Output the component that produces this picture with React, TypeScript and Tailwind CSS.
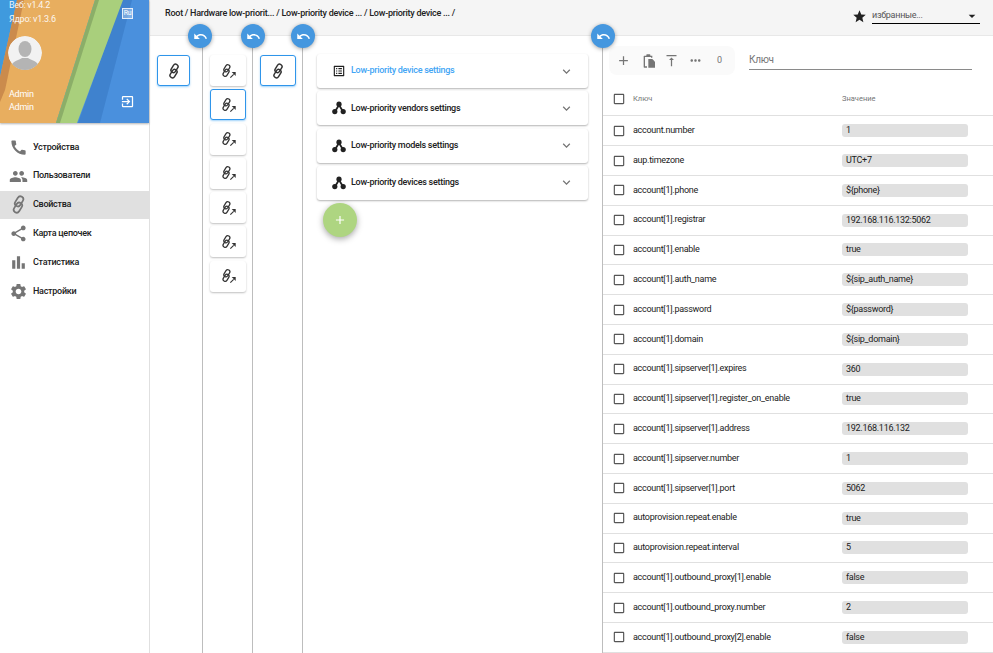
import { MdCall, MdPeople, MdShare, MdBarChart, MdSettings, MdStar, MdAdd, MdUndo, MdExpandMore, MdExitToApp, MdCheckBoxOutlineBlank, MdMoreHoriz, MdVerticalAlignTop, MdListAlt, MdArrowDropDown } from "react-icons/md";

function Chain() {
  return (
    <g fill="none" stroke="currentColor" strokeWidth="2.2" transform="rotate(32 12 12)">
      <rect x="6.8" y="1.5" width="7.4" height="13.5" rx="3.7" />
      <rect x="9.8" y="9" width="7.4" height="13.5" rx="3.7" />
    </g>
  );
}

function LinkIcon({ size = 16, className = "" }: { size?: number; className?: string }) {
  return (
    <svg width={size} height={size} viewBox="0 0 24 24" className={className}>
      <Chain />
    </svg>
  );
}

function LinkArrowIcon() {
  return (
    <svg width={18} height={16} viewBox="0 0 27 24" className="text-[#333]">
      <g transform="translate(1 1) scale(0.85)">
        <Chain />
      </g>
      <path d="M17 22l5-5" fill="none" stroke="currentColor" strokeWidth="1.6" />
      <path d="M19 13.5h6v6z" fill="currentColor" />
    </svg>
  );
}

function HubIcon() {
  return (
    <svg width={14} height={14} viewBox="0 0 14 14" fill="#212121">
      <path d="M7 4L3 10.5M7 4l4 6.5" stroke="#212121" strokeWidth="1.8" />
      <circle cx="7" cy="3.2" r="2.6" />
      <circle cx="2.8" cy="10.6" r="2.6" />
      <circle cx="11.2" cy="10.6" r="2.6" />
    </svg>
  );
}

function PasteIcon() {
  return (
    <svg width={16} height={16} viewBox="0 0 24 24" fill="currentColor">
      <path d="M9 2h4a1 1 0 0 1 1 1v1h3v3h-2V6H6v14h3v2H5a1 1 0 0 1-1-1V5a1 1 0 0 1 1-1h3V3a1 1 0 0 1 1-1z" />
      <path d="M11 9h6l4 4v9H11z" />
    </svg>
  );
}

function Avatar() {
  return (
    <svg width="34" height="34" viewBox="0 0 34 34" className="rounded-full">
      <circle cx="17" cy="17" r="17" fill="#f2f2f2" />
      <ellipse cx="17" cy="13" rx="6.5" ry="8" fill="#b4b4b4" />
      <path d="M3 31c1-6 8-7 11-9h6c3 2 10 3 11 9a17 17 0 0 1-28 0z" fill="#b4b4b4" />
    </svg>
  );
}

function Banner() {
  return (
    <svg className="absolute inset-0" width="150" height="123" viewBox="0 0 150 123" preserveAspectRatio="none">
      <rect width="150" height="123" fill="#4a90dd" />
      <polygon points="78,123 122,0 132,0 100,123" fill="#3a7cc8" opacity="0.7" />
      <polygon points="0,0 17,0 0,77" fill="#3f9ade" />
      <polygon points="17,0 95,0 56,123 0,123 0,77" fill="#e8ae5f" />
      <polygon points="17,0 24,0 5,90 0,102 0,77" fill="#c17f45" opacity="0.75" />
      <polygon points="95,0 123,0 77,123 56,123" fill="#a9cf7c" />
      <polygon points="95,0 99,0 60,123 56,123" fill="#7f9f60" opacity="0.7" />
    </svg>
  );
}

const navItems = [
  { label: "Устройства", icon: <MdCall size={19} /> },
  { label: "Пользователи", icon: <MdPeople size={19} /> },
  { label: "Свойства", icon: <LinkIcon size={19} />, active: true },
  { label: "Карта цепочек", icon: <MdShare size={19} /> },
  { label: "Статистика", icon: <MdBarChart size={19} /> },
  { label: "Настройки", icon: <MdSettings size={19} /> },
];

const rows = [
  ["account.number", "1"],
  ["aup.timezone", "UTC+7"],
  ["account[1].phone", "${phone}"],
  ["account[1].registrar", "192.168.116.132:5062"],
  ["account[1].enable", "true"],
  ["account[1].auth_name", "${sip_auth_name}"],
  ["account[1].password", "${password}"],
  ["account[1].domain", "${sip_domain}"],
  ["account[1].sipserver[1].expires", "360"],
  ["account[1].sipserver[1].register_on_enable", "true"],
  ["account[1].sipserver[1].address", "192.168.116.132"],
  ["account[1].sipserver.number", "1"],
  ["account[1].sipserver[1].port", "5062"],
  ["autoprovision.repeat.enable", "true"],
  ["autoprovision.repeat.interval", "5"],
  ["account[1].outbound_proxy[1].enable", "false"],
  ["account[1].outbound_proxy.number", "2"],
  ["account[1].outbound_proxy[2].enable", "false"],
];

const sections = [
  { label: "Low-priority device settings", active: true },
  { label: "Low-priority vendors settings" },
  { label: "Low-priority models settings" },
  { label: "Low-priority devices settings" },
];

function BackButton({ className }: { className: string }) {
  return (
    <button className={`absolute -top-[12px] z-10 flex h-6 w-6 items-center justify-center rounded-full bg-[#4597df] text-white shadow-[0_1px_4px_rgba(0,0,0,0.35)] ${className}`}>
      <MdUndo size={15} />
    </button>
  );
}

function Tile({ selected, arrow }: { selected?: boolean; arrow?: boolean }) {
  return (
    <div
      className={`flex h-[31px] w-9 shrink-0 items-center justify-center rounded-[3px] bg-white ${
        selected ? "border border-[#2f95ea] shadow-[0_1px_2px_rgba(66,165,245,0.5)]" : "shadow-[0_1px_2px_rgba(0,0,0,0.25)]"
      }`}
    >
      {arrow ? <LinkArrowIcon /> : <LinkIcon size={16} className="text-[#333]" />}
    </div>
  );
}

export default function App() {
  return (
    <div className="flex h-[653px] w-[993px] overflow-hidden bg-white font-['Roboto',sans-serif] text-[9px] tracking-[-0.28px] text-[#212121]">
      {/* sidebar */}
      <aside className="h-full w-[150px] shrink-0 border-r border-[#e0e0e0]">
        <div className="relative h-[123px] overflow-hidden text-white shadow-[0_1px_2px_rgba(0,0,0,0.3)]">
          <Banner />
          <div className="relative flex h-full flex-col px-[9px]">
            <div className="mt-[-1px] leading-[13px] opacity-90">Веб: v1.4.2</div>
            <div className="mt-[1px] leading-[13px] opacity-90">Ядро: v1.3.6</div>
            <div className="-ml-[1px] mt-[10px] h-[34px] w-[34px]">
              <Avatar />
            </div>
            <div className="mt-[18px] leading-[13px]">Admin</div>
            <div className="mt-[0px] leading-[13px]">Admin</div>
          </div>
          <div className="absolute left-[122px] top-[8px] flex h-[11px] w-[11px] items-center justify-center border border-white/80 bg-white/30 text-[7px] leading-none">
            Ru
          </div>
          <MdExitToApp size={15} className="absolute left-[120px] top-[94px] text-white" />
        </div>
        <nav className="mt-[10px]">
          {navItems.map((item) => (
            <div
              key={item.label}
              className={`flex h-[28.8px] items-center font-medium ${item.active ? "bg-[#e0e0e0]" : ""}`}
            >
              <div className="flex w-[33px] shrink-0 justify-center pl-[4px] text-[#757575]">{item.icon}</div>
              <span>{item.label}</span>
            </div>
          ))}
        </nav>
      </aside>

      <div className="flex min-w-0 flex-1 flex-col">
        {/* header */}
        <header className="flex h-[36px] shrink-0 items-start justify-between border-b border-[#e8e8e8] bg-[#f5f5f5] pl-[15px] pr-[13px]">
          <div className="mt-[7px] font-medium leading-[13px] tracking-[-0.25px]">
            Root / Hardware low-priorit... / Low-priority device ... / Low-priority device ... /
          </div>
          <div className="mt-[8px] flex items-center gap-[5px]">
            <MdStar size={15} />
            <div className="flex h-[16px] w-[108px] items-center justify-between border-b border-black">
              <span className="text-[#555]">избранные...</span>
              <MdArrowDropDown size={16} />
            </div>
          </div>
        </header>

        <div className="flex min-h-0 flex-1">
          {/* columns */}
          <div className="relative flex w-[53px] shrink-0 justify-center border-r border-[#bdbdbd] pr-[5px] pt-[19px]">
            <BackButton className="-right-[10px]" />
            <div className="h-fit w-[33px] [&>div]:w-[33px]">
              <Tile selected />
            </div>
          </div>
          <div className="relative flex w-[50px] shrink-0 flex-col items-center gap-[3.3px] border-r border-[#bdbdbd] pt-[19px]">
            <BackButton className="-right-[13px]" />
            {[0, 1, 2, 3, 4, 5, 6].map((i) => (
              <Tile key={i} arrow selected={i === 1} />
            ))}
          </div>
          <div className="relative flex w-[50px] shrink-0 items-start justify-center border-r border-[#bdbdbd] pt-[19px]">
            <BackButton className="-right-[13px]" />
            <Tile selected />
          </div>

          {/* sections */}
          <div className="relative w-[299px] shrink-0 pl-[14px] pr-[14px] pt-[18px]">
            <BackButton className="-right-[13px]" />
            <div className="flex flex-col gap-[3.3px]">
              {sections.map((s) => (
                <div
                  key={s.label}
                  className="flex h-[34px] items-center rounded-[3px] bg-white pl-[15px] pr-[14px] font-medium shadow-[0_1px_2px_rgba(0,0,0,0.3)]"
                >
                  <span className="flex w-[19px] shrink-0">
                    {s.active ? <MdListAlt size={14} /> : <HubIcon />}
                  </span>
                  <span className={`flex-1 ${s.active ? "text-[#42a5f5]" : ""}`}>{s.label}</span>
                  <MdExpandMore size={15} className="text-[#757575]" />
                </div>
              ))}
            </div>
            <button className="ml-[6px] mt-[3px] flex h-[34px] w-[34px] items-center justify-center rounded-full bg-[#aed581] text-white shadow-[0_2px_6px_rgba(0,0,0,0.35)]">
              <MdAdd size={14} />
            </button>
          </div>

          {/* properties */}
          <div className="min-w-0 flex-1 border-l border-[#bdbdbd]">
            <div className="flex h-[48px] items-start pl-[6px] pt-[10px]">
              <div className="flex h-[29px] w-[126px] items-center rounded-[8px] bg-[#fafafa] pl-[7px] text-[#757575]">
                <MdAdd size={15} />
                <span className="ml-[10px] flex"><PasteIcon /></span>
                <MdVerticalAlignTop size={15} className="ml-[7px]" />
                <MdMoreHoriz size={15} className="ml-[9px]" />
                <span className="ml-[14px]">0</span>
              </div>
              <div className="ml-[14px] h-[24px] w-[223px] border-b border-[#8a8a8a] pt-[7px] text-[10px] leading-[14px] text-[#757575]">
                Ключ
              </div>
            </div>
            <div className="flex h-[32.4px] items-center border-b border-[#e0e0e0] pb-[2px] text-[7.5px] tracking-normal text-[#757575]">
              <MdCheckBoxOutlineBlank size={14} className="ml-[9px] w-[14px] shrink-0 text-[#555]" />
              <span className="ml-[7px] w-[209px] shrink-0">Ключ</span>
              <span>Значение</span>
            </div>
            {rows.map(([key, value]) => (
              <div key={key} className="flex h-[29.8px] items-center border-b border-[#e0e0e0]">
                <MdCheckBoxOutlineBlank size={14} className="ml-[9px] w-[14px] shrink-0 text-[#555]" />
                <span className="ml-[7px] w-[209px] shrink-0 truncate">{key}</span>
                <span className="h-[13px] w-[126px] rounded-[3px] bg-[#e0e0e0] pl-[4px] leading-[13px]">{value}</span>
              </div>
            ))}
          </div>
        </div>
      </div>
    </div>
  );
}
